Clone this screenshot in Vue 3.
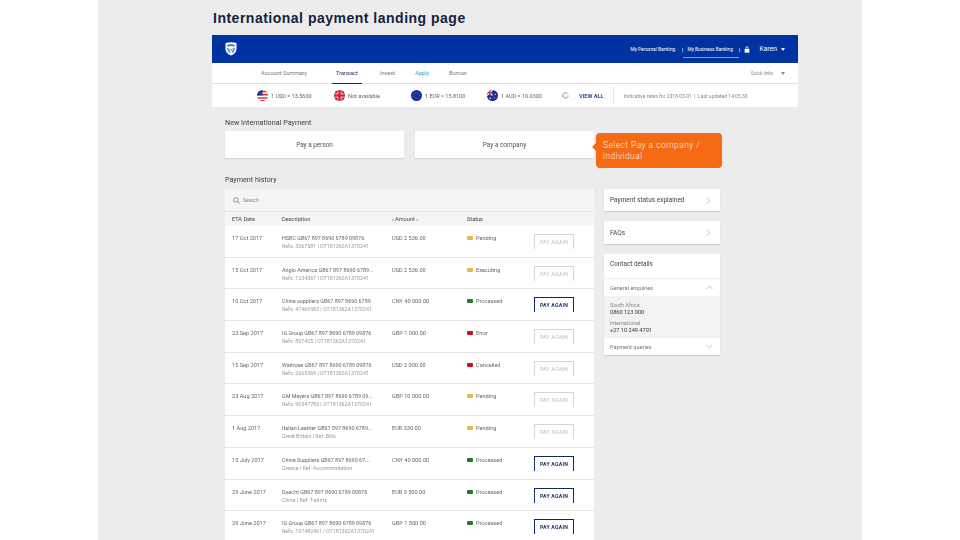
<script setup>
const rows = [
  { date: '17 Oct 2017', d1: 'HSBC GB67 897 8690 6789 09876', d2: 'Refs: 3267581 | OT181362A1370241', amt: 'USD 2 536.00', st: 'Pending', c: 'amber', on: false },
  { date: '15 Oct 2017', d1: 'Anglo America GB67 897 8690 6789...', d2: 'Refs: 1234567 | OT181362A1370241', amt: 'USD 2 536.00', st: 'Executing', c: 'amber', on: false },
  { date: '10 Oct 2017', d1: 'China suppliers GB67 897 8690 6789', d2: 'Refs: 47469583 | OT181362A1370241', amt: 'CNY 40 000.00', st: 'Processed', c: 'green', on: true },
  { date: '23 Sep 2017', d1: 'IG Group GB67 897 8690 6789 09876', d2: 'Refs: 897425 | OT181362A1370241', amt: 'GBP 1 000.00', st: 'Error', c: 'red', on: false },
  { date: '15 Sep 2017', d1: 'Waitrose GB67 897 8690 6789 09876', d2: 'Refs: 2665369 | OT181362A1370241', amt: 'USD 2 000.00', st: 'Cancelled', c: 'red', on: false },
  { date: '23 Aug 2017', d1: 'GM Meyers GB67 897 8690 6789 09...', d2: 'Refs: 96547783 | OT181362A1370241', amt: 'GBP 10 000.00', st: 'Pending', c: 'amber', on: false },
  { date: '1 Aug 2017', d1: 'Italian Leather GB67 897 8690 6789...', d2: 'Great Britain | Ref: Bills', amt: 'EUR 330.00', st: 'Pending', c: 'amber', on: false },
  { date: '15 July 2017', d1: 'China Suppliers GB67 897 8690 67...', d2: 'Greece | Ref: Accommodation', amt: 'CNY 40 000.00', st: 'Processed', c: 'green', on: true },
  { date: '29 June 2017', d1: 'Duecht GB67 897 8690 6789 09876', d2: 'China | Ref: T-shirts', amt: 'EUR 3 500.00', st: 'Processed', c: 'green', on: true },
  { date: '29 June 2017', d1: 'IG Group GB67 897 8690 6789 09876', d2: 'Refs: 197482461 | OT181362A1370241', amt: 'GBP 1 500.00', st: 'Processed', c: 'green', on: true },
]
</script>

<template>
  <div class="page">
    <div class="slide">
      <h1 class="title">International payment landing page</h1>
      <div class="app">
        <header class="top">
          <svg class="logo" viewBox="0 0 24 28">
            <path d="M1 2 Q12 -1 23 2 V15 Q22 23 12 27 Q2 23 1 15 Z" fill="#fff" />
            <path d="M4 6 Q12 3 20 6 L19 9 Q12 7 5 9 Z" fill="#3f6cc0" />
            <path d="M4 12 Q9 10 12 15 Q15 10 20 12 V15 Q19 20 14 23 L12 17 L10 23 Q5 20 4 15 Z" fill="#6f9ad8" />
            <path d="M8 12 L12 21 L16 12" fill="none" stroke="#fff" stroke-width="1.4" />
          </svg>
          <div class="toplinks">
            <span>My Personal Banking</span>
            <i class="bar">|</i>
            <span class="current">My Business Banking</span>
            <i class="bar">|</i>
            <svg class="lock" viewBox="0 0 10 12">
              <path d="M3 5V3.2a2 2 0 0 1 4 0V5" fill="none" stroke="#fff" stroke-width="1.3" />
              <rect x="1" y="5" width="8" height="6.5" fill="#fff" />
            </svg>
            <b class="user">Karen</b>
            <i class="caret white"></i>
          </div>
        </header>

        <nav class="nav">
          <span class="n1">Account Summary</span>
          <span class="n2 active">Transact</span>
          <span class="n3">Invest</span>
          <span class="n4 apply">Apply</span>
          <span class="n5">Borrow</span>
          <span class="quick">Quick links</span>
          <i class="caret grey"></i>
        </nav>

        <div class="rates">
          <svg class="flag" viewBox="0 0 20 20">
            <clipPath id="c1"><circle cx="10" cy="10" r="10" /></clipPath>
            <g clip-path="url(#c1)">
              <rect width="20" height="20" fill="#fff" />
              <path d="M0 1h20v3H0zM0 7h20v3H0zM0 13h20v3H0zM0 18h20v2H0z" fill="#d8324a" />
              <rect width="10" height="10" fill="#2b3f87" />
            </g>
          </svg>
          <span class="rate r1">1 USD = 13.5600</span>
          <svg class="flag" viewBox="0 0 20 20">
            <clipPath id="c2"><circle cx="10" cy="10" r="10" /></clipPath>
            <g clip-path="url(#c2)">
              <rect width="20" height="20" fill="#27367f" />
              <path d="M0 0L20 20M20 0L0 20" stroke="#d6203a" stroke-width="3" />
              <path d="M10 0V20M0 10H20" stroke="#fff" stroke-width="7" />
              <path d="M10 0V20M0 10H20" stroke="#d6203a" stroke-width="4.6" />
            </g>
          </svg>
          <span class="rate r2">Not available</span>
          <svg class="flag" viewBox="0 0 20 20">
            <circle cx="10" cy="10" r="10" fill="#12309a" />
            <circle cx="10" cy="10" r="5.5" fill="none" stroke="#c9b85a" stroke-width="1" stroke-dasharray="1 1.9" />
          </svg>
          <span class="rate r3">1 EUR = 15.8100</span>
          <svg class="flag" viewBox="0 0 20 20">
            <clipPath id="c4"><circle cx="10" cy="10" r="10" /></clipPath>
            <g clip-path="url(#c4)">
              <rect width="20" height="20" fill="#1c2f86" />
              <path d="M0 0L10 10M10 0L0 10" stroke="#fff" stroke-width="2" />
              <path d="M5 0V10M0 5H10" stroke="#d6203a" stroke-width="2" />
              <circle cx="15" cy="8" r="1" fill="#fff" />
              <circle cx="13" cy="14" r="1" fill="#fff" />
              <circle cx="6" cy="15" r="1.4" fill="#fff" />
            </g>
          </svg>
          <span class="rate r4">1 AUD = 10.0300</span>
          <svg class="refresh" viewBox="0 0 12 12">
            <path d="M9.8 3.2A4.6 4.6 0 1 0 10.6 6" fill="none" stroke="#1f5fa8" stroke-width="1.1" />
          </svg>
          <span class="viewall">VIEW ALL</span>
          <i class="vsep"></i>
          <span class="indic">Indicative rates for 2018-03-01 &nbsp;|&nbsp; Last updated 14:05:30</span>
        </div>

        <main class="content">
          <h2 class="sect first">New International Payment</h2>
          <div class="paywrap">
            <div class="pay">Pay a person</div>
            <div class="pay">Pay a company</div>
            <div class="callout">Select Pay a company / individual</div>
          </div>

          <h2 class="sect second">Payment history</h2>
          <div class="cols">
            <section class="table">
              <div class="search">
                <svg class="sicon" viewBox="0 0 12 12">
                  <circle cx="5" cy="5" r="3.8" fill="none" stroke="#555" stroke-width="1" />
                  <path d="M8 8l3.4 3.4" stroke="#555" stroke-width="1.1" />
                </svg>
                <span>Search</span>
              </div>
              <div class="row head">
                <span>ETA Date</span>
                <span>Description</span>
                <span>‹&nbsp;Amount&nbsp;›</span>
                <span>Status</span>
              </div>
              <div v-for="r in rows" :key="r.d1 + r.date" class="row item">
                <span class="line1">{{ r.date }}</span>
                <div class="desc">
                  <div class="line1 tight">{{ r.d1 }}</div>
                  <div class="line2">{{ r.d2 }}</div>
                </div>
                <span class="line1">{{ r.amt }}</span>
                <span class="line1 status"><i class="mark" :class="r.c"></i>{{ r.st }}</span>
                <button class="again" :class="{ on: r.on }">PAY AGAIN</button>
              </div>
            </section>

            <aside class="side">
              <div class="sc link">
                <span>Payment status explained</span>
                <svg class="chev" viewBox="0 0 5 7"><path d="M.8.8L4 3.5.8 6.2" /></svg>
              </div>
              <div class="sc link">
                <span>FAQs</span>
                <svg class="chev" viewBox="0 0 5 7"><path d="M.8.8L4 3.5.8 6.2" /></svg>
              </div>
              <div class="sc contact">
                <div class="ctitle">Contact details</div>
                <div class="acc">
                  <span>General enquiries</span>
                  <svg class="chev wide" viewBox="0 0 7 5"><path d="M.5 4L3.5 1l3 3" /></svg>
                </div>
                <div class="panel">
                  <div class="lab">South Africa</div>
                  <div class="num">0860 123 000</div>
                  <div class="lab gap">International</div>
                  <div class="num">+27 10 249 4701</div>
                </div>
                <div class="acc">
                  <span>Payment queries</span>
                  <svg class="chev wide" viewBox="0 0 7 5"><path d="M.5 1l3 3 3-3" /></svg>
                </div>
              </div>
            </aside>
          </div>
        </main>
      </div>
    </div>
  </div>
</template>

<style>
html, body { margin: 0; background: #fff; }
</style>

<style scoped>
.page { display: flex; justify-content: center; height: 540px; overflow: hidden; font-family: Roboto, "Liberation Sans", sans-serif; }
.slide { width: 764px; height: 540px; background: #ececec; overflow: hidden; padding-left: 114px; padding-right: 64px; box-sizing: border-box; }
.title { margin: 0; height: 35px; padding: 10px 0 0 1px; box-sizing: border-box; font: bold 14px/16px "Liberation Sans", sans-serif; letter-spacing: .5px; color: #12233d; white-space: nowrap; }
.app { width: 586px; filter: blur(.35px); }

.top { height: 28px; background: #0033a1; display: flex; align-items: center; padding-left: 13px; padding-right: 13px; }
.logo { width: 12px; height: 14px; }
.toplinks { margin-left: auto; display: flex; align-items: center; height: 100%; color: #fff; font-size: 4.8px; font-weight: 400; }
.toplinks > span { width: 47px; white-space: nowrap; position: relative; }
.toplinks .current::after { content: ""; position: absolute; left: -4px; right: -5px; top: 10.5px; height: 1px; background: #5aa9e0; }
.bar { font-style: normal; width: 10px; text-align: center; font-size: 6px; }
.lock { width: 6px; height: 7px; }
.user { margin-left: 9px; font-size: 6.8px; font-weight: 400; }
.caret { width: 0; height: 0; border-left: 2.5px solid transparent; border-right: 2.5px solid transparent; border-top: 3px solid #fff; margin-left: 4px; }
.caret.grey { border-top-color: #888; margin-left: 8px; }

.nav { height: 21px; background: #fff; display: flex; align-items: center; font-size: 5.6px; color: #777; position: relative; border-bottom: 1px solid #e2e2e2; box-sizing: border-box; padding-right: 13px; }
.nav span { white-space: nowrap; }
.n1 { margin-left: 49px; width: 75px; }
.n2 { width: 44px; color: #222f66; position: relative; }
.n2::after { content: ""; position: absolute; left: -4px; width: 30px; top: 13px; height: 1px; background: #0a2a7a; }
.n3 { width: 35px; }
.n4 { width: 34px; color: #2a9fd0; }
.n5 { width: 40px; }
.quick { margin-left: auto; color: #888; font-size: 4.6px; }

.rates { height: 23px; background: #fff; display: flex; align-items: center; font-size: 5.5px; color: #666; white-space: nowrap; }
.flag { width: 11px; height: 11px; flex: none; }
.flag:first-child { margin-left: 45px; }
.rate { margin-left: 3px; }
.r1 { width: 63px; }
.r2 { width: 63px; }
.r3 { width: 62px; }
.r4 { width: 61px; }
.refresh { width: 7px; height: 7px; flex: none; }
.viewall { margin-left: 10px; width: 34px; color: #2a4f96; font-weight: 700; font-size: 5.6px; }
.vsep { width: 1px; height: 17px; background: #e6e6e6; flex: none; }
.indic { margin-left: 10px; font-size: 5px; color: #888; }

.content { padding-left: 13px; }
.sect { margin: 0; font-size: 7.2px; line-height: 9px; font-weight: 400; color: #3c3c3c; }
.sect.first { padding-top: 11px; height: 24px; box-sizing: border-box; }
.sect.second { padding-top: 17px; height: 31px; box-sizing: border-box; }
.paywrap { position: relative; display: grid; grid-template-columns: 179px 179px; column-gap: 11px; width: 369px; }
.pay { height: 27px; background: #fff; box-shadow: 0 1px 1px #d4d4d4; display: flex; align-items: center; justify-content: center; font-size: 6.4px; color: #555; }
.callout { position: absolute; left: 371px; top: 2px; width: 126px; height: 35px; box-sizing: border-box; padding: 7px 7px 0; background: #f56a14; border-radius: 4px; color: #fff0e4; font-size: 8.4px; font-weight: 300; line-height: 11px; letter-spacing: .5px; }
.callout::before { content: ""; position: absolute; left: -4px; top: 10px; border-right: 4px solid #f56a14; border-top: 4px solid transparent; border-bottom: 4px solid transparent; }

.cols { display: grid; grid-template-columns: 369px 116px; column-gap: 10px; align-items: start; }
.table { background: #fff; }
.search { height: 23px; background: #f5f5f5; border-bottom: 1px solid #e8e8e8; box-sizing: border-box; display: flex; align-items: center; padding-left: 8px; font-size: 5.2px; color: #888; border-radius: 2px 2px 0 0; }
.sicon { width: 7px; height: 7px; margin-right: 3px; }
.row { display: grid; grid-template-columns: 50px 110px 75px 67px 40px; padding-left: 7px; box-sizing: border-box; }
.head { height: 14px; background: #f5f5f5; align-items: center; font-size: 5.6px; color: #444; }
.item { height: 31.7px; border-bottom: 1px solid #e6e6e6; padding-top: 8px; align-items: start; position: relative; }
.line1 { font-size: 5.6px; line-height: 8px; color: #666; white-space: nowrap; }
.line1.tight { font-size: 5.4px; }
.line2 { font-size: 5.3px; line-height: 8px; color: #999; white-space: nowrap; }
.status { display: flex; align-items: center; }
.mark { width: 6px; height: 4px; margin-right: 3px; border-radius: 1px; flex: none; }
.mark.amber { background: #f0b54a; }
.mark.green { background: #1f7d2a; }
.mark.red { background: #c8102e; }
.again { width: 40px; height: 15px; padding: 0; background: #fff; border: 1px solid #d6d6d6; border-bottom: 0; font: 700 5.2px Roboto, sans-serif; color: #d0d0d0; letter-spacing: .2px; }
.again.on { border-color: #0f2a5c; color: #1c3268; }

.side { display: flex; flex-direction: column; }
.sc { background: #fff; box-shadow: 0 1px 1px #cfcfcf; }
.link { height: 22px; margin-bottom: 10px; display: flex; align-items: center; justify-content: space-between; padding: 0 9px 0 6px; font-size: 6.5px; color: #444; }
.link:nth-child(2) { height: 23px; }
.chev { width: 5px; height: 7px; flex: none; fill: none; stroke: #999; stroke-width: .6; }
.chev.wide { width: 7px; height: 5px; }
.ctitle { height: 25px; padding: 6px 6px 0; box-sizing: border-box; border-bottom: 1px solid #eee; font-size: 6.4px; line-height: 8px; color: #444; }
.acc { height: 17px; display: flex; align-items: center; justify-content: space-between; padding: 0 7px 0 6px; font-size: 5.6px; color: #777; }
.panel { height: 42px; background: #f2f2f2; padding: 5.5px 6px 0; box-sizing: border-box; }
.lab { font-size: 5.4px; line-height: 7px; color: #888; }
.lab.gap { margin-top: 4.5px; }
.num { font-size: 5.6px; line-height: 7px; color: #333; }
</style>
